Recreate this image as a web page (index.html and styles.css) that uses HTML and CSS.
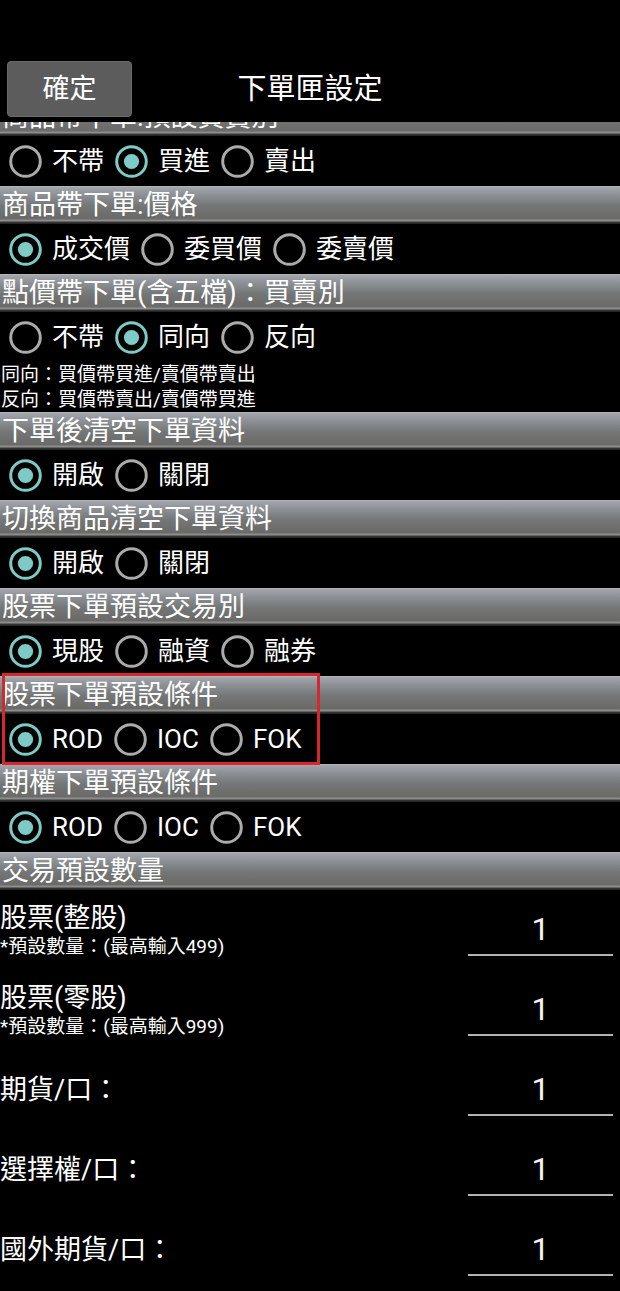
FILE: index.html
```html
<!DOCTYPE html>
<html lang="zh-Hant">
<head>
<meta charset="utf-8">
<title>下單匣設定</title>
<link rel="stylesheet" href="styles.css">
</head>
<body>
<div class="screen">
  <header class="topbar">
    <button class="btn">確定</button>
    <div class="title">下單匣設定</div>
    <div></div>
  </header>
  <div class="scroll">
    <div class="list">
      <div class="sec">商品帶下單:預設買賣別</div>
      <div class="opts">
        <label class="opt"><svg class="radio" viewBox="0 0 33 33"><circle class="ring" cx="16.5" cy="16.5" r="14.8"/></svg><span>不帶</span></label>
        <label class="opt on"><svg class="radio" viewBox="0 0 33 33"><circle class="ring" cx="16.5" cy="16.5" r="14.8"/><circle class="dot" cx="16.5" cy="16.5" r="7.6"/></svg><span>買進</span></label>
        <label class="opt"><svg class="radio" viewBox="0 0 33 33"><circle class="ring" cx="16.5" cy="16.5" r="14.8"/></svg><span>賣出</span></label>
      </div>

      <div class="sec">商品帶下單:價格</div>
      <div class="opts">
        <label class="opt on"><svg class="radio" viewBox="0 0 33 33"><circle class="ring" cx="16.5" cy="16.5" r="14.8"/><circle class="dot" cx="16.5" cy="16.5" r="7.6"/></svg><span>成交價</span></label>
        <label class="opt"><svg class="radio" viewBox="0 0 33 33"><circle class="ring" cx="16.5" cy="16.5" r="14.8"/></svg><span>委買價</span></label>
        <label class="opt"><svg class="radio" viewBox="0 0 33 33"><circle class="ring" cx="16.5" cy="16.5" r="14.8"/></svg><span>委賣價</span></label>
      </div>

      <div class="sec">點價帶下單(含五檔)：買賣別</div>
      <div class="opts">
        <label class="opt"><svg class="radio" viewBox="0 0 33 33"><circle class="ring" cx="16.5" cy="16.5" r="14.8"/></svg><span>不帶</span></label>
        <label class="opt on"><svg class="radio" viewBox="0 0 33 33"><circle class="ring" cx="16.5" cy="16.5" r="14.8"/><circle class="dot" cx="16.5" cy="16.5" r="7.6"/></svg><span>同向</span></label>
        <label class="opt"><svg class="radio" viewBox="0 0 33 33"><circle class="ring" cx="16.5" cy="16.5" r="14.8"/></svg><span>反向</span></label>
      </div>
      <div class="notes">
        <div>同向：買價帶買進/賣價帶賣出</div>
        <div>反向：買價帶賣出/賣價帶買進</div>
      </div>

      <div class="sec">下單後清空下單資料</div>
      <div class="opts">
        <label class="opt on"><svg class="radio" viewBox="0 0 33 33"><circle class="ring" cx="16.5" cy="16.5" r="14.8"/><circle class="dot" cx="16.5" cy="16.5" r="7.6"/></svg><span>開啟</span></label>
        <label class="opt"><svg class="radio" viewBox="0 0 33 33"><circle class="ring" cx="16.5" cy="16.5" r="14.8"/></svg><span>關閉</span></label>
      </div>

      <div class="sec">切換商品清空下單資料</div>
      <div class="opts">
        <label class="opt on"><svg class="radio" viewBox="0 0 33 33"><circle class="ring" cx="16.5" cy="16.5" r="14.8"/><circle class="dot" cx="16.5" cy="16.5" r="7.6"/></svg><span>開啟</span></label>
        <label class="opt"><svg class="radio" viewBox="0 0 33 33"><circle class="ring" cx="16.5" cy="16.5" r="14.8"/></svg><span>關閉</span></label>
      </div>

      <div class="sec">股票下單預設交易別</div>
      <div class="opts">
        <label class="opt on"><svg class="radio" viewBox="0 0 33 33"><circle class="ring" cx="16.5" cy="16.5" r="14.8"/><circle class="dot" cx="16.5" cy="16.5" r="7.6"/></svg><span>現股</span></label>
        <label class="opt"><svg class="radio" viewBox="0 0 33 33"><circle class="ring" cx="16.5" cy="16.5" r="14.8"/></svg><span>融資</span></label>
        <label class="opt"><svg class="radio" viewBox="0 0 33 33"><circle class="ring" cx="16.5" cy="16.5" r="14.8"/></svg><span>融券</span></label>
      </div>

      <div class="marked">
        <div class="sec">股票下單預設條件</div>
        <div class="opts">
          <label class="opt on"><svg class="radio" viewBox="0 0 33 33"><circle class="ring" cx="16.5" cy="16.5" r="14.8"/><circle class="dot" cx="16.5" cy="16.5" r="7.6"/></svg><span>ROD</span></label>
          <label class="opt"><svg class="radio" viewBox="0 0 33 33"><circle class="ring" cx="16.5" cy="16.5" r="14.8"/></svg><span>IOC</span></label>
          <label class="opt"><svg class="radio" viewBox="0 0 33 33"><circle class="ring" cx="16.5" cy="16.5" r="14.8"/></svg><span>FOK</span></label>
        </div>
        <div class="highlight"></div>
      </div>

      <div class="sec">期權下單預設條件</div>
      <div class="opts">
        <label class="opt on"><svg class="radio" viewBox="0 0 33 33"><circle class="ring" cx="16.5" cy="16.5" r="14.8"/><circle class="dot" cx="16.5" cy="16.5" r="7.6"/></svg><span>ROD</span></label>
        <label class="opt"><svg class="radio" viewBox="0 0 33 33"><circle class="ring" cx="16.5" cy="16.5" r="14.8"/></svg><span>IOC</span></label>
        <label class="opt"><svg class="radio" viewBox="0 0 33 33"><circle class="ring" cx="16.5" cy="16.5" r="14.8"/></svg><span>FOK</span></label>
      </div>

      <div class="sec">交易預設數量</div>
      <div class="qty">
        <div class="qlabel"><div class="qname">股票(整股)</div><div class="qsub">*預設數量：(最高輸入499)</div></div>
        <div class="qinput">1</div>
      </div>
      <div class="qty">
        <div class="qlabel"><div class="qname">股票(零股)</div><div class="qsub">*預設數量：(最高輸入999)</div></div>
        <div class="qinput">1</div>
      </div>
      <div class="qty">
        <div class="qlabel"><div class="qname">期貨/口：</div></div>
        <div class="qinput">1</div>
      </div>
      <div class="qty">
        <div class="qlabel"><div class="qname">選擇權/口：</div></div>
        <div class="qinput">1</div>
      </div>
      <div class="qty">
        <div class="qlabel"><div class="qname">國外期貨/口：</div></div>
        <div class="qinput">1</div>
      </div>
    </div>
  </div>
</div>
</body>
</html>
```
FILE: styles.css
```css
* { box-sizing: border-box; }
html, body {
  margin: 0;
  padding: 0;
  background: #000;
}
body {
  font-family: Roboto, "Noto Sans CJK TC", "Noto Sans", sans-serif;
  color: #fff;
}
.screen {
  width: 620px;
  height: 1291px;
  overflow: hidden;
  background: #000;
  display: flex;
  flex-direction: column;
}
.topbar {
  height: 122px;
  flex: none;
  padding-top: 61px;
  display: grid;
  grid-template-columns: 1fr auto 1fr;
  align-items: start;
  background: #000;
  position: relative;
  z-index: 1;
}
.btn {
  justify-self: start;
  margin-left: 7px;
  width: 125px;
  height: 56px;
  background: #5c5c5c;
  border: 1px solid #6a6a6a;
  border-radius: 4px;
  color: #fff;
  font-family: Roboto, "Noto Sans CJK TC", sans-serif;
  font-size: 27px;
  line-height: 54px;
  padding: 0;
}
.title {
  font-size: 29px;
  line-height: 56px;
  color: #fff;
}
.scroll {
  flex: 1;
  overflow: hidden;
}
.list {
  margin-top: -24px;
}
.sec {
  height: 38px;
  font-size: 27px;
  line-height: 38px;
  padding-left: 2px;
  color: #fff;
  white-space: nowrap;
  background: linear-gradient(to bottom,
    #b2b6ba 0px, #a0a4a8 2px, #8a8e92 10px, #747676 20px,
    #6c6c6a 30px, #6a6a68 33px, #8e8e8e 34px, #8a8a8a 35px, #3c3c3c 36px, #1c1c1c 38px);
}
.opts {
  height: 50px;
  display: flex;
  align-items: center;
  gap: 11px;
  padding-left: 9px;
}
.opt {
  display: flex;
  align-items: center;
  gap: 10px;
  font-size: 26px;
  line-height: 34px;
  color: #fff;
}
.radio {
  width: 33px;
  height: 33px;
  display: block;
  flex: none;
}
.ring {
  fill: none;
  stroke: #ababab;
  stroke-width: 3;
}
.on .ring { stroke: #7ecbc5; }
.dot { fill: #7ecbc5; }
.notes {
  height: 50px;
  font-size: 19px;
  line-height: 25px;
  padding-left: 1px;
  color: #fff;
}
.marked {
  position: relative;
}
.highlight {
  position: absolute;
  left: 2px;
  top: -3px;
  width: 318px;
  height: 92px;
  border: 3px solid #d8262f;
  pointer-events: none;
}
.qty {
  height: 80px;
  display: flex;
  justify-content: space-between;
  align-items: center;
}
.qname {
  font-size: 27px;
  line-height: 34px;
  color: #fff;
  white-space: nowrap;
}
.qsub {
  font-size: 19px;
  line-height: 24px;
  color: #fff;
  white-space: nowrap;
}
.qinput {
  width: 145px;
  height: 52px;
  margin-right: 7px;
  border-bottom: 2px solid #b4b4b4;
  text-align: center;
  font-size: 32px;
  line-height: 50px;
  color: #f2f2f2;
}
```
